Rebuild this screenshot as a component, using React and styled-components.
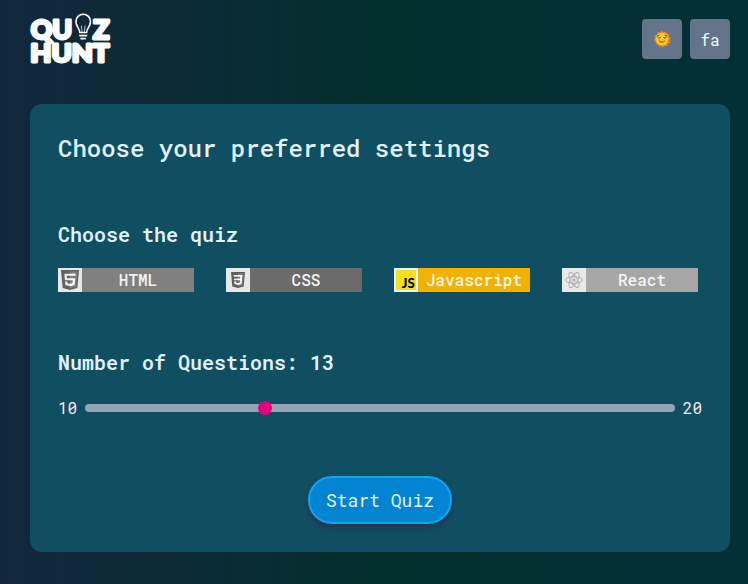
import React, { useState } from "react";
import styled, { createGlobalStyle } from "styled-components";

const GlobalStyle = createGlobalStyle`
  *, *::before, *::after { box-sizing: border-box; }
  body {
    margin: 0;
    font-family: "Roboto Mono", "DejaVu Sans Mono", monospace;
    color: #e0f2fe;
  }
  button { font: inherit; color: inherit; cursor: pointer; }
`;

const Page = styled.div`
  min-height: 584px;
  padding: 13px 18px 32px 30px;
  background: linear-gradient(to right, #12273d 0%, #022f2c 52%, #033037 100%);
`;

const Header = styled.header`
  display: flex;
  justify-content: space-between;
  align-items: center;
  height: 52px;
  margin-bottom: 39px;
`;

const Logo = styled.svg`
  display: block;
  width: 82px;
  height: 52px;
  overflow: visible;
`;

const Tools = styled.div`
  display: flex;
  gap: 8px;
`;

const ToolButton = styled.button`
  display: flex;
  align-items: center;
  justify-content: center;
  width: 40px;
  height: 40px;
  padding: 0;
  border: 0;
  border-radius: 4px;
  background: #64748b;
  color: #f0f9ff;
  font-size: 16px;
`;

const Card = styled.main`
  display: flex;
  flex-direction: column;
  height: 448px;
  padding: 28px;
  border-radius: 12px;
  background: #104e62;
`;

const Title = styled.h1`
  margin: 0 0 56px;
  font-size: 24px;
  line-height: 32px;
  font-weight: 500;
`;

const Subtitle = styled.h2`
  margin: 0;
  font-size: 20px;
  line-height: 28px;
  font-weight: 560;
`;

const QuizList = styled.div`
  display: flex;
  gap: 32px;
  margin: 20px 0 56px;
`;

const QuizOption = styled.button`
  display: flex;
  width: 136px;
  height: 24px;
  padding: 0;
  border: 0;
  background: ${(p) => p.$color};
  color: #f3f3f3;
`;

const IconTile = styled.span`
  display: flex;
  align-items: center;
  justify-content: center;
  width: 24px;
  height: 24px;
  background: ${(p) => (p.$active ? "#e0f2fe" : "#e8e8e8")};
`;

const QuizName = styled.span`
  flex: 1;
  text-align: center;
  font-size: 16px;
  line-height: 24px;
  font-weight: 500;
`;

const SliderRow = styled.div`
  display: flex;
  align-items: center;
  gap: 8px;
  height: 24px;
  margin-top: 20px;
  font-size: 16px;
  line-height: 24px;
  color: #fce7f3;
`;

const Slider = styled.input`
  flex: 1;
  min-width: 0;
  height: 8px;
  margin: 0;
  appearance: none;
  border-radius: 4px;
  background: #94a3b8;
  &::-webkit-slider-thumb {
    appearance: none;
    width: 14px;
    height: 14px;
    border-radius: 50%;
    background: #e6007a;
  }
`;

const StartButton = styled.button`
  align-self: center;
  width: 144px;
  height: 48px;
  margin-top: 56px;
  padding: 0;
  border: 2px solid #0ea5f5;
  border-radius: 24px;
  background: #0284d3;
  box-shadow: 0 4px 6px -1px rgba(80, 7, 36, 0.4);
  font-size: 18px;
`;

const LogoMark = () => (
  <Logo viewBox="0 0 82 52" fill="#fff" fontFamily="Lato, sans-serif" fontWeight="900">
    <g stroke="#fff" strokeWidth="2.800" strokeLinejoin="round">
      <text x="0.700" y="26" fontSize="26.500" textLength="41.500" lengthAdjust="spacingAndGlyphs">QU</text>
      <text x="63" y="26" fontSize="26.500" textLength="16.500" lengthAdjust="spacingAndGlyphs">Z</text>
      <text x="0.300" y="49.200" fontSize="24.500" textLength="79" lengthAdjust="spacingAndGlyphs">HUNT</text>
    </g>
    <g fill="none" stroke="#fff" strokeWidth="1.600" strokeLinecap="round">
      <path d="M49.800 19.500c0-4-3.900-6-3.900-11a7.300 7.300 0 0 1 14.600 0c0 5-3.900 7-3.900 11z" />
      <path d="M52 18.500l-.6-5.500M54.400 18.500l.6-5.500" strokeWidth="0.700" />
      <path d="M49.800 22.600h6.800M51 25.600h4.400" />
    </g>
  </Logo>
);

const SunFace = () => (
  <svg width="18" height="18" viewBox="0 0 18 18">
    <path
      fill="#f58220"
      d="M9 .8l1.700 1.600 2.200-.8.9 2.200 2.400.5-.1 2.400 1.700 1.700-1.300 2 .8 2.300-2.300.9-.6 2.300-2.400-.1L10.300 17.400 8.300 16l-2.300.8-1-2.200-2.300-.6v-2.400L.9 9.900l1.400-2-.8-2.300 2.300-.9.500-2.400 2.500.1z"
    />
    <circle cx="9" cy="9" r="6.300" fill="#fcc926" />
    <g fill="none" stroke="#543010" strokeWidth="0.900" strokeLinecap="round">
      <path d="M4.200 6.200l1.800-1M13.800 6.200l-1.800-1M5 7.800c.8.500 1.700.5 2.400-.3M10.600 7.500c.7.800 1.600.8 2.400.3M6.400 11.200c1.500 1.300 3.700 1.300 5.200 0" />
    </g>
  </svg>
);

const HtmlIcon = () => (
  <svg width="18" height="20" viewBox="30 0 451 512" preserveAspectRatio="none">
    <path fill="#626262" d="M71 460 30 0h451l-41 460-185 52z" />
    <path fill="#808080" d="M256 472l149-41 35-394H256z" />
    <path fill="#ebebeb" d="M256 208h-75l-5-58h80V94H114l15 171h127zM256 355l-64-17-4-45h-56l7 89 117 32z" />
    <path fill="#fff" d="M255 208v57h70l-7 73-63 17v59l116-32 16-174zM255 94v56h137l5-56z" />
  </svg>
);

const CssIcon = () => (
  <svg width="14" height="16" viewBox="30 0 451 512" preserveAspectRatio="none">
    <path fill="#5f5f5f" d="M71 460 30 0h451l-41 460-185 52z" />
    <path fill="#777" d="M256 472l149-41 35-394H256z" />
    <path fill="#ebebeb" d="M256 94H114l5 56h137zM256 208H125l5 57h126zM256 355l-64-17-4-45h-56l7 89 117 32z" />
    <path fill="#fff" d="M255 94h142l-25 288-117 32v-59l63-17 7-73h-70v-57h75l4-58h-79z" />
  </svg>
);

const JsIcon = () => (
  <svg width="20" height="20" viewBox="0 0 20 20">
    <path fill="#f7df1e" d="M0 0h20v20H0z" />
    <text x="5.800" y="18.300" textLength="13" lengthAdjust="spacingAndGlyphs" fontFamily="Lato, sans-serif" fontWeight="900" fontSize="12.500">
      JS
    </text>
  </svg>
);

const ReactIcon = () => (
  <svg width="18" height="18" viewBox="-9 -9 18 18" fill="none" stroke="#aaa" strokeWidth="0.900">
    <circle r="1.500" fill="#aaa" stroke="none" />
    <ellipse rx="8.500" ry="3.300" />
    <ellipse rx="8.500" ry="3.300" transform="rotate(60)" />
    <ellipse rx="8.500" ry="3.300" transform="rotate(120)" />
  </svg>
);

const quizzes = [
  { name: "HTML", color: "#808080", Icon: HtmlIcon },
  { name: "CSS", color: "#6b6b6b", Icon: CssIcon },
  { name: "Javascript", color: "#f2b200", Icon: JsIcon, active: true },
  { name: "React", color: "#a6a6a6", Icon: ReactIcon },
];

export default function App() {
  const [count, setCount] = useState(13);
  return (
    <Page>
      <GlobalStyle />
      <Header>
        <LogoMark />
        <Tools>
          <ToolButton aria-label="Theme"><SunFace /></ToolButton>
          <ToolButton>fa</ToolButton>
        </Tools>
      </Header>
      <Card>
        <Title>Choose your preferred settings</Title>
        <Subtitle>Choose the quiz</Subtitle>
        <QuizList>
          {quizzes.map(({ name, color, Icon, active }) => (
            <QuizOption key={name} $color={color}>
              <IconTile $active={active}><Icon /></IconTile>
              <QuizName>{name}</QuizName>
            </QuizOption>
          ))}
        </QuizList>
        <Subtitle>Number of Questions: {count}</Subtitle>
        <SliderRow>
          <span>10</span>
          <Slider type="range" min="10" max="20" value={count} onChange={(e) => setCount(Number(e.target.value))} />
          <span>20</span>
        </SliderRow>
        <StartButton>Start Quiz</StartButton>
      </Card>
    </Page>
  );
}
